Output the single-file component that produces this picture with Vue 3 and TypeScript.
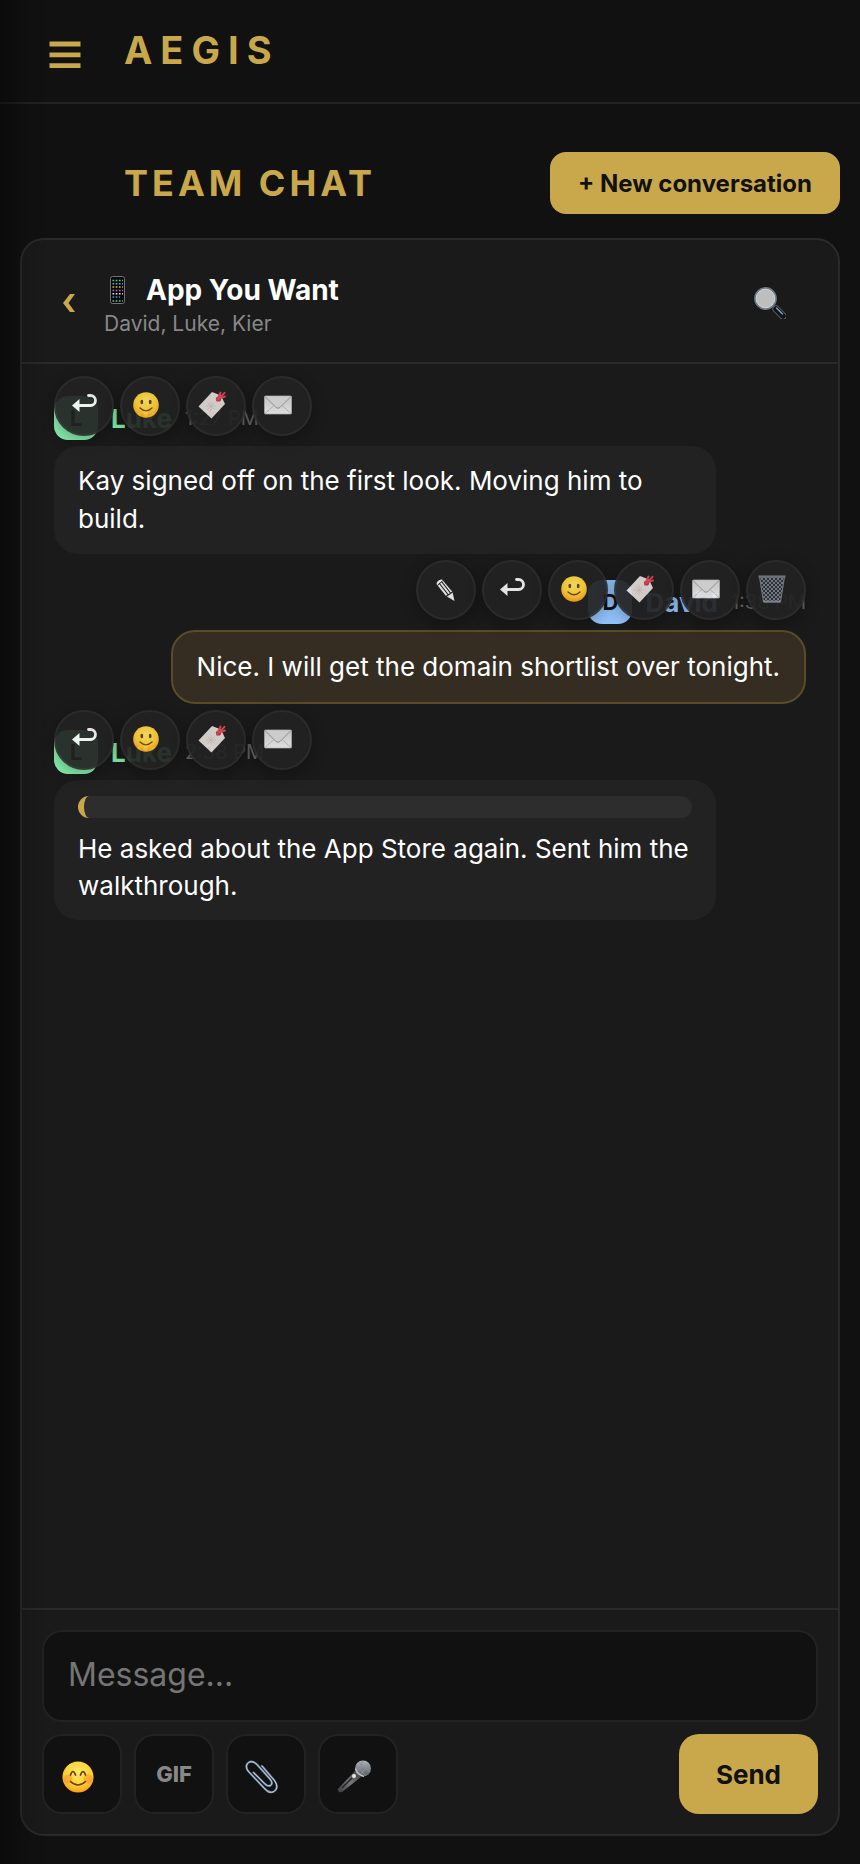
<script setup lang="ts">
import { ref } from 'vue'

interface Action {
  icon: string
  label: string
  emoji: boolean
}

interface Message {
  id: number
  author: string
  time: string
  text: string
  tone: 'green' | 'blue'
  own: boolean
  quoted: boolean
  actions: Action[]
}

const common: Action[] = [
  { icon: 'reply', label: 'Reply', emoji: false },
  { icon: 'smile', label: 'React', emoji: true },
  { icon: 'tag', label: 'Tag', emoji: true },
  { icon: 'mail', label: 'Mark unread', emoji: true },
]

const ownActions: Action[] = [
  { icon: 'pencil', label: 'Edit', emoji: false },
  ...common,
  { icon: 'trash', label: 'Delete', emoji: true },
]

const messages: Message[] = [
  { id: 1, author: 'Luke', time: '1:27 PM', text: 'Kay signed off on the first look. Moving him to build.', tone: 'green', own: false, quoted: false, actions: common },
  { id: 2, author: 'David', time: '1:38 PM', text: 'Nice. I will get the domain shortlist over tonight.', tone: 'blue', own: true, quoted: false, actions: ownActions },
  { id: 3, author: 'Luke', time: '2:38 PM', text: 'He asked about the App Store again. Sent him the walkthrough.', tone: 'green', own: false, quoted: true, actions: common },
]

const draft = ref('')
</script>

<template>
  <div class="page">
    <svg class="sprite" aria-hidden="true">
      <defs>
        <radialGradient id="face" cx="50%" cy="35%" r="65%">
          <stop offset="0" stop-color="#ffea66" />
          <stop offset="0.65" stop-color="#ffcf35" />
          <stop offset="1" stop-color="#f8a01c" />
        </radialGradient>
        <linearGradient id="steel" x1="0" y1="0" x2="0" y2="1">
          <stop offset="0" stop-color="#aeb4bb" />
          <stop offset="1" stop-color="#565c64" />
        </linearGradient>
        <linearGradient id="paper" x1="0" y1="0" x2="0" y2="1">
          <stop offset="0" stop-color="#d2d2d2" />
          <stop offset="1" stop-color="#efefef" />
        </linearGradient>
        <linearGradient id="handle" x1="0" y1="1" x2="1" y2="0">
          <stop offset="0" stop-color="#3c3c3e" />
          <stop offset="0.5" stop-color="#77777a" />
          <stop offset="1" stop-color="#3a3a3c" />
        </linearGradient>
        <pattern id="mesh" width="4" height="4" patternUnits="userSpaceOnUse">
          <path d="M0 0L4 4M4 0L0 4" stroke="#8d939c" stroke-width="0.8" />
        </pattern>
      </defs>
      <symbol id="reply" viewBox="0 0 28 28">
        <path d="M9 13.500H20.500A4.600 4.600 0 0 0 20.500 3.500H18.500" fill="none" stroke="#f6f6f6" stroke-width="2.800" stroke-linecap="round" />
        <path d="M2 13.500L9.500 7V20Z" fill="#f6f6f6" />
      </symbol>
      <symbol id="pencil" viewBox="0 0 28 28">
        <path d="M5 6Q7 3 10 3.500L20.500 16L22.500 25L14 20L4.500 8Z" fill="#f2f2f2" />
        <path d="M7 7L16 18.500M9.500 5.500L18.500 17M14 20.500L20.500 16" stroke="#222" stroke-width="1.200" />
        <path d="M5.500 9.500L10.500 5" stroke="#222" stroke-width="1" />
      </symbol>
      <symbol id="smile" viewBox="0 0 28 28">
        <circle cx="14" cy="14" r="12.800" fill="url(#face)" />
        <ellipse cx="9.800" cy="11" rx="1.400" ry="2.200" fill="#6b3d0c" />
        <ellipse cx="18.200" cy="11" rx="1.400" ry="2.200" fill="#6b3d0c" />
        <path d="M8 17Q14 22.500 20 17" fill="none" stroke="#75420c" stroke-width="1.400" stroke-linecap="round" />
      </symbol>
      <symbol id="blush" viewBox="0 0 32 32">
        <circle cx="16" cy="16" r="15.500" fill="url(#face)" />
        <circle cx="6" cy="18" r="4.500" fill="#f46a22" opacity="0.350" />
        <circle cx="26" cy="18" r="4.500" fill="#f46a22" opacity="0.350" />
        <path d="M8.500 14Q11 7 13.500 14M18.500 14Q21 7 23.500 14" fill="none" stroke="#6b3d0c" stroke-width="1.700" stroke-linecap="round" />
        <path d="M8.500 20.500Q16 27.500 23.500 20.500" fill="none" stroke="#6b3d0c" stroke-width="1.600" stroke-linecap="round" />
      </symbol>
      <symbol id="tag" viewBox="0 0 28 28">
        <path d="M0.500 15.500L14 1L23 4.500L27 13L13.500 27.500Z" fill="#e2dcd7" />
        <path d="M8 15H18M13 10V20M9.500 11.500L16.500 18.500M16.500 11.500L9.500 18.500" stroke="#cdc3ba" stroke-width="0.900" />
        <circle cx="20.500" cy="8" r="2.600" fill="#b93643" />
        <path d="M19 9.500L22.500 1.500M20.500 8L26.500 1.800M20.500 7.500L27 5.500" fill="none" stroke="#df4755" stroke-width="1.900" stroke-linecap="round" />
      </symbol>
      <symbol id="mail" viewBox="0 0 28 28">
        <rect x="0.500" y="5" width="27" height="18" rx="1" fill="url(#paper)" stroke="#bdbdbd" stroke-width="0.700" />
        <path d="M1 22.500L10.500 14M27 22.500L17.500 14" stroke="#b8b8b8" stroke-width="0.900" />
        <path d="M1 5.500L12 16.500Q14 18 16 16.500L27 5.500" fill="#dcdcdc" stroke="#999" stroke-width="1" />
      </symbol>
      <symbol id="trash" viewBox="0 0 28 28">
        <path d="M1.500 2H26.500L22.500 27H5.500Z" fill="#30343a" />
        <path d="M1.500 2H26.500L22.500 27H5.500Z" fill="url(#mesh)" stroke="#7b8088" stroke-width="1" />
        <path d="M0.500 1.500H27.500" stroke="#747a82" stroke-width="2.200" />
        <path d="M5.500 26.500H22.500" stroke="#858c96" stroke-width="1.800" />
      </symbol>
      <symbol id="phone" viewBox="0 0 28 28">
        <rect x="6.500" y="0.500" width="14" height="27" rx="2" fill="#08090b" stroke="#6d7272" stroke-width="1" />
        <g stroke-width="1.500" fill="none" stroke-dasharray="1.700 1.500">
          <path d="M8.500 4.500H19" stroke="#5ec68a" />
          <path d="M8.500 7.800H19" stroke="#58a7dd" />
          <path d="M8.500 11.100H19" stroke="#dcb84d" />
          <path d="M8.500 14.400H19" stroke="#b769c8" />
          <path d="M8.500 17.700H19" stroke="#e0dfdc" />
          <path d="M8.500 21H16" stroke="#4f8fd0" />
          <path d="M8.500 25H19" stroke="#58c9a2" />
        </g>
      </symbol>
      <symbol id="search" viewBox="0 0 32 32">
        <path d="M22 22L29 29" stroke="#6d737b" stroke-width="7" stroke-linecap="round" />
        <path d="M22 22L29 29" stroke="#101418" stroke-width="5.500" stroke-linecap="round" />
        <path d="M22.500 21L28.500 27" stroke="#8ea0ad" stroke-width="1.400" stroke-linecap="round" />
        <circle cx="11.500" cy="11.500" r="10.300" fill="#bebebe" stroke="#6f7983" stroke-width="2.200" />
        <circle cx="11.500" cy="11.500" r="9.300" fill="none" stroke="#d7dce0" stroke-width="0.900" />
      </symbol>
      <symbol id="clip" viewBox="0 0 34 34">
        <path d="M17 6L29.500 20.500Q34.500 27.500 29 31.500Q24.500 34 20 29L3 11Q-0.500 5.500 3.500 2.500Q7.500 0 12 4.500L25 19Q28.500 23.500 25.500 25.500Q22.500 27 19.500 23.500L8.500 12.500" fill="none" stroke="#6f86a0" stroke-width="2" stroke-linecap="round" />
        <path d="M17 6L29.500 20.500Q34.500 27.500 29 31.500Q24.500 34 20 29L3 11Q-0.500 5.500 3.500 2.500Q7.500 0 12 4.500L25 19Q28.500 23.500 25.500 25.500Q22.500 27 19.500 23.500L8.500 12.500" fill="none" stroke="#c4d3e2" stroke-width="0.900" stroke-linecap="round" />
      </symbol>
      <symbol id="mic" viewBox="0 0 34 34">
        <path d="M18 11L24 17L5 32Q1.500 33 0.500 29.500Z" fill="url(#handle)" />
        <path d="M5 28L15 18" stroke="#232325" stroke-width="1.500" />
        <circle cx="26" cy="8.500" r="8" fill="url(#steel)" />
        <path d="M19 5L29 16M22 2L33 12M26 1L20 11M32 4L23 15" stroke="#8c9197" stroke-width="0.900" />
        <path d="M18.500 8.500Q20 14.500 27 16.500" fill="none" stroke="#b8babd" stroke-width="1.600" />
        <circle cx="17" cy="16" r="2" fill="#e5e5e5" />
      </symbol>
    </svg>

    <header class="topbar">
      <button class="menu" type="button" aria-label="Open menu">
        <svg width="32" height="28" viewBox="0 0 32 28" aria-hidden="true">
          <path d="M0.500 3H31.500M0.500 13.800H31.500M0.500 24.600H31.500" stroke="currentColor" stroke-width="4.800" />
        </svg>
      </button>
      <span class="brand">AEGIS</span>
    </header>

    <main class="main">
      <div class="heading">
        <h1>TEAM CHAT</h1>
        <button class="primary new" type="button">+ New conversation</button>
      </div>

      <section class="panel" aria-labelledby="chat-title">
        <header class="chat-head">
          <button class="back" type="button" aria-label="Back">
            <svg width="14" height="20" viewBox="0 0 14 20" aria-hidden="true">
              <path d="M8 1H13L6.500 10L13 19H8L1 10Z" fill="currentColor" />
            </svg>
          </button>
          <div class="who">
            <h2 id="chat-title"><svg class="icon" aria-hidden="true"><use href="#phone" /></svg>App You Want</h2>
            <p>David, Luke, Kier</p>
          </div>
          <button class="search" type="button" aria-label="Search">
            <svg class="icon-l" aria-hidden="true"><use href="#search" /></svg>
          </button>
        </header>

        <div class="messages">
          <article v-for="m in messages" :key="m.id" class="message" :class="[m.tone, { own: m.own }]">
            <div class="meta">
              <span class="avatar">{{ m.author[0] }}</span>
              <strong>{{ m.author }}</strong>
              <time>{{ m.time }}</time>
            </div>
            <div class="bubble" :class="{ quoted: m.quoted }">
              <div v-if="m.quoted" class="quote"></div>
              <p>{{ m.text }}</p>
            </div>
            <div class="actions">
              <button v-for="a in m.actions" :key="a.icon" type="button" :class="{ emoji: a.emoji }" :aria-label="a.label">
                <svg class="icon" aria-hidden="true"><use :href="'#' + a.icon" /></svg>
              </button>
            </div>
          </article>
        </div>

        <form class="composer" @submit.prevent>
          <input v-model="draft" type="text" placeholder="Message..." aria-label="Message" />
          <div class="tools">
            <button class="tool" type="button" aria-label="Emoji"><svg class="icon-l" aria-hidden="true"><use href="#blush" /></svg></button>
            <button class="tool gif" type="button">GIF</button>
            <button class="tool" type="button" aria-label="Attach"><svg class="icon-xl" aria-hidden="true"><use href="#clip" /></svg></button>
            <button class="tool" type="button" aria-label="Record"><svg class="icon-xl" aria-hidden="true"><use href="#mic" /></svg></button>
            <button class="primary send" type="submit">Send</button>
          </div>
        </form>
      </section>
    </main>
  </div>
</template>

<style>
body {
  margin: 0;
  background: #111;
}
</style>

<style scoped>
* {
  box-sizing: border-box;
}
.page {
  position: relative;
  display: flex;
  flex-direction: column;
  min-height: 100vh;
  background: #111;
  color: #fff;
  font-family: Inter, "Liberation Sans", sans-serif;
}
.page::after {
  content: "";
  position: absolute;
  inset: 0 auto 0 0;
  width: 52px;
  background: linear-gradient(90deg, rgba(0, 0, 0, 0.4), rgba(0, 0, 0, 0.1) 50%, transparent);
  pointer-events: none;
}
.sprite {
  position: absolute;
  width: 0;
  height: 0;
}
h1,
h2,
p {
  margin: 0;
}
button {
  display: flex;
  align-items: center;
  justify-content: center;
  padding: 0;
  border: 0;
  background: none;
  color: inherit;
  font: inherit;
  cursor: pointer;
}
svg {
  display: block;
  flex: none;
}
.icon {
  width: 28px;
  height: 28px;
}
.icon-l {
  width: 32px;
  height: 32px;
}
.icon-xl {
  width: 34px;
  height: 34px;
}
.topbar {
  display: flex;
  align-items: center;
  gap: 26px;
  height: 104px;
  padding: 0 32px;
  border-bottom: 2px solid #222;
}
.menu {
  width: 66px;
  height: 64px;
  padding-top: 8px;
  color: #c9a84c;
}
.brand {
  padding-bottom: 2px;
  color: #c9a84c;
  font-size: 38px;
  font-weight: 700;
  line-height: 48px;
  letter-spacing: 8px;
}
.main {
  display: flex;
  flex: 1;
  flex-direction: column;
  gap: 24px;
  padding: 48px 20px 28px;
}
.heading {
  display: flex;
  align-items: center;
  justify-content: space-between;
  padding-left: 104px;
}
h1 {
  color: #c9a84c;
  font-size: 36px;
  font-weight: 700;
  line-height: 44px;
  letter-spacing: 4px;
}
.primary {
  background: #c9a84c;
  color: #111;
  font-weight: 700;
}
.new {
  height: 62px;
  padding: 0 28px;
  border-radius: 16px;
  font-size: 24px;
}
.panel {
  display: flex;
  flex: 1;
  flex-direction: column;
  border: 2px solid #2a2a2a;
  border-radius: 24px;
  background: #1a1a1a;
}
.chat-head {
  display: flex;
  align-items: center;
  padding: 32px 36px 24px 24px;
  border-bottom: 2px solid #2a2a2a;
}
.back {
  width: 46px;
  height: 64px;
  padding-bottom: 4px;
  color: #c9a84c;
}
.who {
  flex: 1;
  display: grid;
  gap: 2px;
  padding-left: 12px;
}
h2 {
  display: flex;
  align-items: center;
  gap: 14px;
  font-size: 28px;
  font-weight: 700;
  line-height: 36px;
}
.who p {
  color: #888;
  font-size: 21px;
  line-height: 28px;
}
.search {
  width: 64px;
  height: 64px;
  padding-bottom: 4px;
}
.messages {
  display: flex;
  flex: 1;
  flex-direction: column;
  gap: 26px;
  padding: 32px;
}
.message {
  position: relative;
  display: flex;
  flex-direction: column;
  align-items: flex-start;
  gap: 6px;
}
.own {
  align-items: flex-end;
}
.green {
  --tone: #86efac;
}
.blue {
  --tone: #93c5fd;
}
.meta {
  display: flex;
  align-items: center;
  gap: 13px;
}
.avatar {
  display: grid;
  place-items: center;
  width: 44px;
  height: 44px;
  border-radius: 14px;
  background: var(--tone);
  color: #111;
  font-size: 22px;
  font-weight: 700;
}
.meta strong {
  color: var(--tone);
  font-size: 26px;
  font-weight: 700;
}
.meta time {
  color: #666;
  font-size: 20px;
}
.bubble {
  max-width: 88%;
  padding: 16px 24px;
  border-radius: 24px;
  background: #222;
  font-size: 26px;
  line-height: 38px;
}
.quoted {
  line-height: 37px;
}
.own .bubble {
  border: 2px solid #5a4c29;
  background: #352d21;
}
.quote {
  height: 22px;
  margin-bottom: 12px;
  border-left: 6px solid #c9a84c;
  border-radius: 12px;
  background: #2d2d2d;
}
.actions {
  position: absolute;
  top: -20px;
  left: 0;
  display: flex;
  gap: 6px;
}
.own .actions {
  right: 0;
  left: auto;
}
.actions button {
  width: 60px;
  height: 60px;
  border: 2px solid #2d2d2d;
  border-radius: 50%;
  background: #222;
  box-shadow: 0 4px 16px rgba(0, 0, 0, 0.3);
  opacity: 0.92;
}
.actions .emoji {
  padding: 0 8px 2px 0;
}
.composer {
  display: grid;
  gap: 12px;
  padding: 20px;
  border-top: 2px solid #2a2a2a;
}
.composer input {
  width: 100%;
  height: 92px;
  padding: 0 24px 4px;
  border: 2px solid #222;
  border-radius: 20px;
  background: #111;
  color: #fff;
  font: inherit;
  font-size: 32px;
}
.composer input::placeholder {
  color: #757575;
}
.tools {
  display: flex;
  gap: 12px;
}
.tool {
  width: 80px;
  height: 80px;
  padding: 6px 8px 0 0;
  border: 2px solid #222;
  border-radius: 20px;
  background: #111;
}
.gif {
  padding: 0;
  color: #888;
  font-size: 22px;
  font-weight: 800;
}
.send {
  height: 80px;
  margin-left: auto;
  padding: 0 37px;
  border-radius: 20px;
  font-size: 26px;
}
</style>
